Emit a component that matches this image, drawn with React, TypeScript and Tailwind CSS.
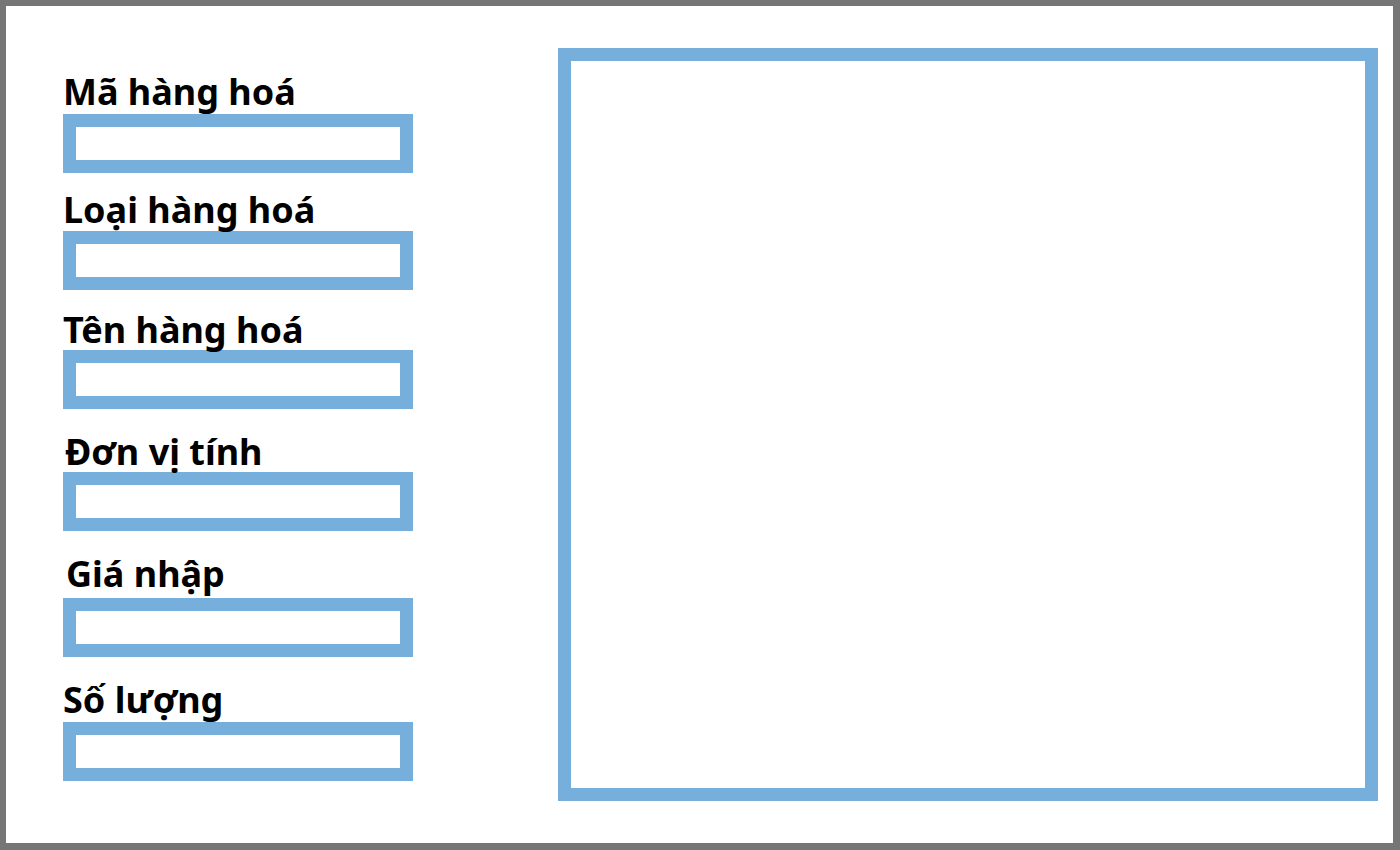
const fields = [
    { label: 'Mã hàng hoá', wrap: 'mt-0', gap: 'mb-[5px]', indent: 'pl-0' },
    { label: 'Loại hàng hoá', wrap: 'mt-[19px]', gap: 'mb-[4px]', indent: 'pl-0' },
    { label: 'Tên hàng hoá', wrap: 'mt-[22px]', gap: 'mb-[3px]', indent: 'pl-0' },
    { label: 'Đơn vị tính', wrap: 'mt-[25px]', gap: 'mb-[3px]', indent: 'pl-[2px]' },
    { label: 'Giá nhập', wrap: 'mt-[25px]', gap: 'mb-[7px]', indent: 'pl-[3px]' },
    { label: 'Số lượng', wrap: 'mt-[25px]', gap: 'mb-[5px]', indent: 'pl-0' },
];

export default function App() {
    return (
        <div
            className="w-[1400px] h-[850px] bg-white border-t-[6px] border-l-[6px] border-r-[7px] border-b-[7px] border-[#767676] flex items-start"
            style={{ fontFamily: '"Noto Sans", "DejaVu Sans", sans-serif' }}
        >
            {/* Form column */}
            <div className="pl-[57px] pt-[68px] w-[407px] shrink-0 flex flex-col">
                {fields.map((f) => (
                    <div key={f.label} className={f.wrap}>
                        <div className={`${f.gap} ${f.indent} h-[35px] text-[36px] leading-[35px] font-bold text-black whitespace-nowrap`}>
                            {f.label}
                        </div>
                        <input
                            type="text"
                            className="block w-[350px] h-[59px] border-[13px] border-[#76afdb] bg-white outline-none px-2 text-xl"
                        />
                    </div>
                ))}
            </div>

            {/* Preview panel */}
            <div className="ml-[145px] mt-[42px] w-[820px] h-[753px] shrink-0 border-[13px] border-[#76afdb] bg-white"></div>
        </div>
    );
}
